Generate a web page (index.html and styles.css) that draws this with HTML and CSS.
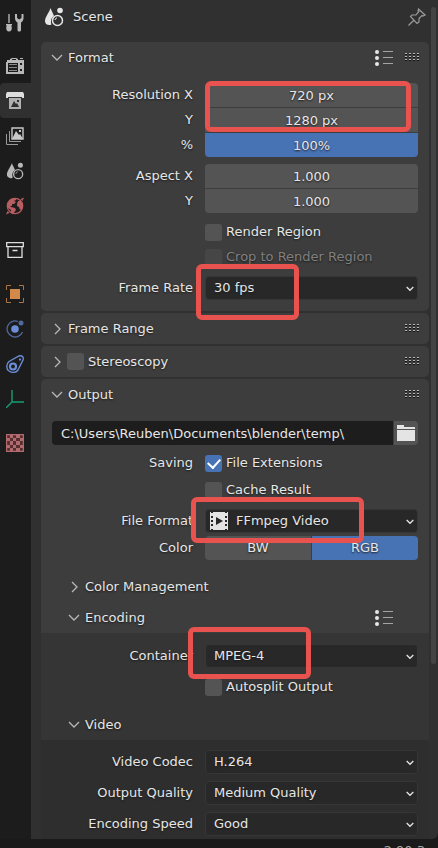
FILE: index.html
```html
<!DOCTYPE html>
<html lang="en">
<head>
<meta charset="utf-8">
<meta name="viewport" content="width=device-width, initial-scale=1">
<title>Scene – Output Properties</title>
<link rel="stylesheet" href="styles.css">
</head>
<body>
<svg class="defs" aria-hidden="true">
  <symbol id="down" viewBox="0 0 12 8"><path d="M1 1l5 5 5-5"/></symbol>
  <symbol id="right" viewBox="0 0 8 12"><path d="M1 1l5 5-5 5"/></symbol>
  <symbol id="scene" viewBox="0 0 20 20">
    <path fill="currentColor" d="M6.500 1C5.500 5 1 10 1 14c0 2.400 1.800 4 4.200 4 .9 0 1.600-.2 2.200-.6C6.300 13.500 7.500 10.500 10 9 9 6 7.500 4 6.500 1z"/>
    <circle cx="16" cy="3.500" r="2.800" fill="currentColor"/>
    <circle cx="13.500" cy="13.500" r="5" fill="none" stroke="currentColor" stroke-width="1.500"/>
    <path d="M11 13a2.700 2.700 0 0 1 2-2.200" fill="none" stroke="currentColor"/>
  </symbol>
  <symbol id="presets" viewBox="0 0 18 16">
    <g fill="#e8e8e8"><circle cx="2" cy="2" r="2"/><circle cx="2" cy="8" r="2"/><circle cx="2" cy="14" r="2"/></g>
    <path d="M8 1.500h10M8 7.500h10M8 13.500h10" stroke="#a4a4a4"/>
  </symbol>
  <symbol id="grip" viewBox="0 0 15 9">
    <path d="M0 1.500h15M0 4.500h15M0 7.500h15" stroke="#151515" stroke-width="1" stroke-dasharray="2 2"/>
    <path d="M0 .5h15M0 3.500h15M0 6.500h15" stroke="#b8b8b8" stroke-width="1" stroke-dasharray="2 2"/>
  </symbol>
</svg>
<div class="app">
  <div class="workspace">
    <nav class="tabs" aria-label="Properties tabs">
      <button class="tab tab-tool" aria-label="Tool"><svg viewBox="0 0 18 18"><path d="M3 0v9" stroke="#aaa" stroke-width="1.500"/><path fill="#b8b8b8" d="M0 10h6v1.500H5c1.500 1.500 1 6-2 6s-3.500-4.500-2-6H0z"/><path fill="#b8b8b8" d="M9 0v4c0 2 1 3.500 2.500 4.500V16c0 2 3.500 2 3.500 0V8.500C16.500 7.500 17.500 6 17.500 4V0h-2v4l-2.200 1.500L11 4V0z"/></svg></button>
      <button class="tab" aria-label="Render"><svg viewBox="0 0 18 18"><path fill="#b8b8b8" fill-rule="evenodd" d="M4 2l2-1h4l2 1v1h6v14H0V5h1V3h3zM6 2v1h4V2zM2 6v9h10V6zM14 6v2h2V6zM14 12v2h2v-2z"/><path d="M3 7.500h8M3 10.500h8M3 13.500h8" stroke="#888"/><path d="M14 1.500h3" stroke="#b8b8b8"/></svg></button>
      <button class="tab active" aria-label="Output" aria-current="page"><svg viewBox="0 0 18 18"><path fill="#ddd" d="M1 0h16l1 2v4h-2V5H2v1H0V2z"/><path fill="#b0b0b0" d="M3 6h12v11H3z"/><path fill="#303030" d="M5 15l3-6 2 3 1-1 2 4zM11 8h2v2h-2z"/></svg></button>
      <button class="tab" aria-label="View Layer"><svg viewBox="0 0 18 18"><path fill="none" stroke="#c8c8c8" stroke-width="1.400" d="M6 1h11v11H6z"/><path fill="#c8c8c8" d="M6 12l4-8 3 4 1-1 3 5zM13 3h2v2h-2z"/><path fill="none" stroke="#999" d="M3.500 4v10.500H15M.5 7v10.500H12"/></svg></button>
      <button class="tab" aria-label="Scene"><svg><use href="#scene"/></svg></button>
      <button class="tab" aria-label="World"><svg viewBox="0 0 18 18"><circle cx="9" cy="9" r="7.700" fill="none" stroke="#b85d61" stroke-width="1.300"/><path fill="#b85d61" d="M2 6l3-4 5-1v2L8 4l2 1-2 2-2 0v2l-2 0 1 1 4 1 1 2-3 4-2-1v-3l-3-2-1-3zM12 4l3 0 2 4-1 4-2 1-1-3-2-1 0-2zM0 17.500l3.500-1.500-2-2zM18 .5L14.500 2l2 2z"/></svg></button>
      <button class="tab gap-before" aria-label="Collection"><svg viewBox="0 0 18 18" fill="none" stroke="#ddd" stroke-width="1.300"><path d="M.7 1.700h16.600v4H.7zM2 6v10.300h14V6M6.500 9.500h5" /></svg></button>
      <button class="tab gap-before" aria-label="Object"><svg viewBox="0 0 18 18"><path fill="#d18a4a" d="M4 4h10v10H4z"/><path fill="none" stroke="#a97545" d="M.5 5V.5H5M13 .5h4.500V5M17.500 13v4.500H13M5 17.500H.5V13"/></svg></button>
      <button class="tab" aria-label="Physics"><svg viewBox="0 0 18 18"><path fill="none" stroke="#50699f" stroke-width="1.300" d="M12 1.500A8 8 0 1 0 16.500 12"/><circle cx="9" cy="9" r="3.800" fill="#6b8ed6"/><circle cx="15" cy="3" r="2.500" fill="#50699f"/></svg></button>
      <button class="tab" aria-label="Object Constraints"><svg viewBox="0 0 18 18" fill="none" stroke="#6b8ed6"><path stroke-width="1.400" d="M3 6.500L13 1c3-1 5 1 4 4l-5 10c-2 3-6 3-9 1s-3-7 0-9.500z"/><circle cx="7" cy="11.500" r="3" stroke-width="2.200"/><path stroke-width="1.400" d="M13 4.500h2M14 3.500v2"/></svg></button>
      <button class="tab" aria-label="Object Data"><svg viewBox="0 0 18 18"><path d="M6 0v12h12M6 12l-6 6" fill="none" stroke="#149d76" stroke-width="1.400"/></svg></button>
      <button class="tab gap-before" aria-label="Texture"><svg viewBox="0 0 18 18"><path fill="#582f31" d="M0 0h18v18H0z"/><path fill="none" stroke="#b16a6d" stroke-width="1.200" d="M.6.6h16.800v16.800H.6z"/><path fill="#b16a6d" d="M4 1h3v3H4zM10 1h4v3h-4zM1 4h3v3H1zM7 4h3v3H7zM14 4h3v3h-3zM4 7h3v4H4zM10 7h4v4h-4zM1 11h3v3H1zM7 11h3v3H7zM14 11h3v3h-3zM4 14h3v3H4zM10 14h4v3h-4z"/></svg></button>
    </nav>
    <main class="editor">
      <header class="crumb">
        <svg class="scene-icon"><use href="#scene"/></svg>
        <h1>Scene</h1>
        <button class="pin" aria-label="Pin"><svg viewBox="0 0 18 18" fill="none" stroke="#999" stroke-width="1.200"><path d="M10.500 1l6.500 6-2 1-1-.5-3 3V14l-2 1.500L2.500 8.500 4 7h4l3-3.500L10 3zM6 12L.5 17.500"/></svg></button>
      </header>

      <section class="panel format">
        <header class="head"><button class="toggle"><svg class="down"><use href="#down"/></svg>Format</button><svg class="presets"><use href="#presets"/></svg><svg class="grip"><use href="#grip"/></svg></header>
        <div class="body">
          <div class="stack">
            <div class="row"><label for="rx">Resolution X</label><input id="rx" class="number top" value="720 px"></div>
            <div class="row"><label for="ry">Y</label><input id="ry" class="number" value="1280 px"></div>
            <div class="row"><label for="pc">%</label><input id="pc" class="number bottom blue" value="100%"></div>
            <div class="marklayer"><span class="mark mark-size"></span></div>
          </div>
          <div class="stack aspect">
            <div class="row"><label for="ax">Aspect X</label><input id="ax" class="number top" value="1.000"></div>
            <div class="row"><label for="ay">Y</label><input id="ay" class="number bottom" value="1.000"></div>
          </div>
          <div class="row check-row"><label class="check"><input type="checkbox">Render Region</label></div>
          <div class="row check-row"><label class="check disabled"><input type="checkbox" disabled>Crop to Render Region</label></div>
          <div class="row rate"><label for="fr">Frame Rate</label><div class="choice"><select id="fr"><option>30 fps</option></select><svg class="caret"><use href="#down"/></svg><span class="mark mark-rate"></span></div></div>
        </div>
      </section>

      <section class="panel"><header class="head"><button class="toggle"><svg class="right"><use href="#right"/></svg>Frame Range</button><svg class="grip"><use href="#grip"/></svg></header></section>
      <section class="panel"><header class="head"><button class="toggle narrow" aria-label="Expand Stereoscopy"><svg class="right"><use href="#right"/></svg></button><label class="check"><input type="checkbox">Stereoscopy</label><svg class="grip"><use href="#grip"/></svg></header></section>

      <section class="panel">
        <header class="head"><button class="toggle"><svg class="down"><use href="#down"/></svg>Output</button><svg class="grip"><use href="#grip"/></svg></header>
        <div class="body">
          <div class="path"><input aria-label="Output Path" value="C:\Users\Reuben\Documents\blender\temp\"><button aria-label="Browse"><svg viewBox="0 0 18 16" fill="#e4e4e4"><path d="M0 0h7v2h11v2H0zM0 5h18v11H0z"/></svg></button></div>
          <div class="row saving"><span class="label">Saving</span><label class="check"><input type="checkbox" checked>File Extensions</label></div>
          <div class="row cache"><label class="check"><input type="checkbox">Cache Result</label></div>
          <div class="row file"><label for="ff">File Format</label><div class="choice"><svg class="film" viewBox="0 0 18 18"><path fill="#e4e4e4" fill-rule="evenodd" d="M0 0h1v1h2V0h12v1h2V0h1v18h-1v-1h-2v1H3v-1H1v1H0zM1 4v2h2V4zM1 8v2h2V8zM1 12v2h2v-2zM15 4v2h2V4zM15 8v2h2V8zM15 12v2h2v-2zM6 5v8l7-4z"/></svg><select id="ff" class="with-icon"><option>FFmpeg Video</option></select><svg class="caret"><use href="#down"/></svg><span class="mark mark-file"></span></div></div>
          <div class="row color"><span class="label">Color</span><div class="segments"><button>BW</button><button class="on" aria-pressed="true">RGB</button></div></div>
        </div>
        <header class="head sub first"><button class="toggle"><svg class="right"><use href="#right"/></svg>Color Management</button></header>
        <header class="head sub"><button class="toggle"><svg class="down"><use href="#down"/></svg>Encoding</button><svg class="presets"><use href="#presets"/></svg></header>
        <div class="encoding">
          <div class="body">
            <div class="row"><label for="co">Container</label><div class="choice"><select id="co"><option>MPEG-4</option></select><svg class="caret"><use href="#down"/></svg><span class="mark mark-container"></span></div></div>
            <div class="row auto"><label class="check"><input type="checkbox">Autosplit Output</label></div>
          </div>
          <header class="head sub"><button class="toggle"><svg class="down"><use href="#down"/></svg>Video</button></header>
          <div class="body video">
            <div class="row"><label for="vc">Video Codec</label><div class="choice"><select id="vc"><option>H.264</option></select><svg class="caret"><use href="#down"/></svg></div></div>
            <div class="row"><label for="oq">Output Quality</label><div class="choice"><select id="oq"><option>Medium Quality</option></select><svg class="caret"><use href="#down"/></svg></div></div>
            <div class="row"><label for="es">Encoding Speed</label><div class="choice"><select id="es"><option>Good</option></select><svg class="caret"><use href="#down"/></svg></div></div>
          </div>
        </div>
      </section>
      <div class="scrollbar"></div>
    </main>
  </div>
  <footer class="status">2.90.3</footer>
</div>
</body>
</html>
```
FILE: styles.css
```css
* { box-sizing: border-box; }
body {
  margin: 0;
  background: #1a1a1a;
  color: #e6e6e6;
  font: 13px/18px "DejaVu Sans", sans-serif;
  text-shadow: 0 1px 2px #1a1a1a;
}
button, input, select { font: inherit; color: inherit; text-shadow: inherit; border: 0; margin: 0; padding: 0; background: none; }
svg { display: block; flex: none; }
.defs { position: absolute; width: 0; height: 0; }
.app { height: 100vh; overflow: hidden; display: flex; flex-direction: column; }
.workspace { flex: 1; min-height: 0; display: flex; overflow: hidden; }

.tabs { flex: none; width: 31px; padding-top: 5px; display: flex; flex-direction: column; background: #1c1c1c; }
.tab { flex: none; height: 35px; display: grid; place-items: center; padding-right: 2px; border-radius: 4px 0 0 4px; }
.tab svg { width: 18px; height: 18px; color: #b8b8b8; }
.tab-tool { margin-bottom: 8px; }
.tab.active { background: #303030; }
.gap-before { margin-top: 9px; }

.editor { position: relative; flex: 1; min-width: 0; padding: 0 9px 0 10px; background: #303030; border-radius: 0 0 6px 0; }
.crumb { height: 42px; display: flex; align-items: center; padding: 0 3px 8px 3px; }
.scene-icon { width: 20px; height: 20px; color: #e6e6e6; }
.crumb h1 { margin: 0 auto 0 9px; font: inherit; }
.pin svg { width: 18px; height: 18px; }
.scrollbar { position: absolute; top: 7px; right: 2px; width: 5px; height: 657px; border-radius: 3px; background: #444; }

.panel { margin-bottom: 2px; border-radius: 5px; background: #3d3d3d; }
.head { height: 31px; display: flex; align-items: center; padding: 0 9px 0 10px; }
.toggle { display: flex; align-items: center; margin-right: auto; }
.toggle svg { fill: none; stroke: #b8b8b8; stroke-width: 1.3; }
.down { width: 12px; height: 8px; margin-right: 5px; }
.right { width: 8px; height: 12px; margin: 0 6px 0 3px; }
.narrow { margin-right: 0; }
.narrow .right { margin-right: 5px; }
.head .check { margin-right: auto; }
.presets { width: 18px; height: 16px; margin-right: 12px; }
.grip { width: 15px; height: 9px; }

.body { padding: 0 11px; }
.row { display: grid; grid-template-columns: 141fr 213fr; column-gap: 12px; align-items: center; }
.row > label:first-child, .label { text-align: right; white-space: nowrap; }
.row > .check, .row > .check:first-child { grid-column: 2; text-align: left; }
.check { display: flex; align-items: center; gap: 4px; white-space: nowrap; }
.check input { appearance: none; width: 17px; height: 17px; border-radius: 3px; background: #545454; display: grid; place-items: center; }
.check input:checked { background: #4772b3; }
.check input:checked::before { content: ""; width: 6px; height: 10px; margin-bottom: 3px; border: solid #fff; border-width: 0 2px 2px 0; transform: rotate(42deg); }
.disabled { color: #808080; }
.disabled input { background: #464646; }

.format .body { padding-top: 10px; padding-bottom: 11px; }
.stack { position: relative; display: flex; flex-direction: column; gap: 1px; }
.number { width: 100%; height: 24px; background: #545454; text-align: center; }
.top { border-radius: 4px 4px 0 0; }
.bottom { border-radius: 0 0 4px 4px; }
.blue { background: #4772b3; }
.aspect { margin: 7px 0 10px; }
.check-row { height: 17px; margin-bottom: 8px; }
.rate { margin-top: 11px; }

.choice { position: relative; min-width: 0; }
.choice select { appearance: none; display: block; width: 100%; height: 24px; padding-left: 8px; border: 1px solid #363636; border-radius: 4px; background: #282828; }
.choice .with-icon { padding-left: 30px; }
.caret { position: absolute; right: 4px; top: 10px; width: 8px; height: 6px; fill: none; stroke: #e2e2e2; stroke-width: 2; }
.film { position: absolute; left: 5px; top: 3px; width: 18px; height: 18px; }

.path { display: flex; gap: 1px; margin-top: 11px; }
.path input { flex: 1; min-width: 0; height: 24px; padding-left: 9px; border-radius: 4px 0 0 4px; background: #1d1d1d; }
.path button { width: 24px; display: grid; place-items: center; border-radius: 0 4px 4px 0; background: #545454; }
.path svg { width: 18px; height: 16px; }
.saving { margin-top: 9px; }
.cache { margin-top: 9px; }
.file { margin-top: 10px; }
.color { margin-top: 3px; }
.segments { display: grid; grid-template-columns: 1fr 1fr; gap: 1px; }
.segments button { height: 24px; background: #545454; border-radius: 4px 0 0 4px; }
.segments .on { background: #4772b3; border-radius: 0 4px 4px 0; }
.sub { padding-left: 27px; padding-right: 24px; }
.first { margin-top: 11px; }
.encoding { background: #353535; }
.encoding > .body:first-child { padding-top: 11px; }
.auto { margin-top: 10px; margin-bottom: 13px; }
.encoding > .video { display: grid; gap: 7px; padding-top: 10px; padding-bottom: 10px; background: #2e2e2e; }

.mark { position: absolute; border: 5px solid #e8524f; border-radius: 6px; pointer-events: none; z-index: 1; }
.marklayer { position: absolute; inset: 0; display: grid; grid-template-columns: 141fr 213fr; column-gap: 12px; pointer-events: none; }
.mark-size { position: relative; grid-column: 2; height: 51px; margin: -2px 7px 0 0; }
.mark-rate { left: -9px; top: -12px; width: 103px; height: 56px; }
.mark-file { left: -14px; top: -12px; width: 173px; height: 46px; }
.mark-container { left: -17px; top: -17px; width: 123px; height: 52px; }

.status { flex: none; height: 9px; padding: 3px 13px 0 0; text-align: right; overflow: hidden; background: #1a1a1a; color: #aaa; }
```
